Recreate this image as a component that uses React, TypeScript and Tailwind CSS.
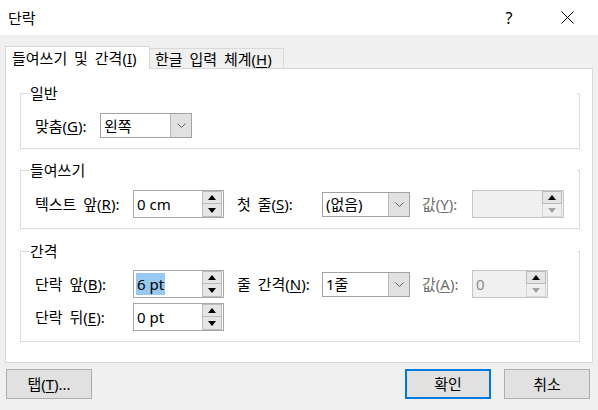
import React from "react";

const LINE = "border-[#dcdcdc]";

function U({ c }: { c: string }) {
  return <span className="underline underline-offset-[2px] decoration-1">{c}</span>;
}

function UpTri({ color = "#000" }: { color?: string }) {
  return (
    <svg width="8" height="5" viewBox="0 0 8 5">
      <polygon points="0,5 8,5 4,0" fill={color} />
    </svg>
  );
}
function DownTri({ color = "#000" }: { color?: string }) {
  return (
    <svg width="8" height="5" viewBox="0 0 8 5">
      <polygon points="0,0 8,0 4,5" fill={color} />
    </svg>
  );
}

function Spin({
  value,
  width,
  selected,
  disabled,
}: {
  value: string;
  width: string;
  selected?: boolean;
  disabled?: boolean;
}) {
  return (
    <div
      className={
        "flex h-[28px] items-center border [word-spacing:0px] " +
        width +
        (disabled ? " border-[#c6c6c6] bg-[#f0f0f0]" : " border-[#a8a8a8] bg-white")
      }
    >
      <div className="flex-1 pl-[2px]">
        {selected ? (
          <span className="bg-[#99c9ef] px-[1px] py-[1px] leading-[20px] inline-block">{value}</span>
        ) : (
          <span className={"px-[1px] " + (disabled ? "text-[#8a8a8a]" : "")}>{value}</span>
        )}
      </div>
      <div className="mr-px flex w-[20px] flex-col">
        <div className="flex h-[13px] items-center justify-center border border-[#bcbcbc] bg-[#e5e5e5]">
          <UpTri />
        </div>
        <div
          className={
            "flex h-[13px] items-center justify-center border border-t-0 " +
            (disabled ? "border-[#d6d6d6] bg-[#f0f0f0]" : "border-[#bcbcbc] bg-[#e5e5e5]")
          }
        >
          <DownTri color={disabled ? "#a3a3a3" : "#000"} />
        </div>
      </div>
    </div>
  );
}

function Combo({ value, width }: { value: string; width: string }) {
  return (
    <div className={"flex h-[25px] border border-[#a2a2a2] bg-white " + width}>
      <div className="flex flex-1 items-center pl-[3px]">{value}</div>
      <div className="flex w-[21px] items-center justify-center border-l border-[#b8b8b8] bg-[#e1e1e1]">
        <svg width="9" height="5" viewBox="0 0 9 5">
          <polyline points="0.5,0.5 4.5,4.5 8.5,0.5" fill="none" stroke="#606060" strokeWidth="1" />
        </svg>
      </div>
    </div>
  );
}

function GroupBox({
  title,
  children,
  className,
  bodyClass,
}: {
  title: string;
  children: React.ReactNode;
  className?: string;
  bodyClass: string;
}) {
  return (
    <div className={"ml-[14px] mr-[12px] " + (className ?? "")}>
      <div className="flex h-[16px]">
        <div className={"h-[8px] w-[9px] self-end border-l border-t " + LINE} />
        <span className="ml-px leading-[16px]">{title}</span>
        <div className="flex-1" />
        <div className={"h-[8px] w-[3px] self-end border-r border-t " + LINE} />
      </div>
      <div className={"border-b border-l border-r pl-[14px] " + LINE + " " + bodyClass}>{children}</div>
    </div>
  );
}

export default function App() {
  return (
    <div className="flex h-[410px] w-[598px] flex-col bg-[#f0f0f0] font-['Noto_Sans','Noto_Sans_CJK_KR',sans-serif] text-[15px] leading-[20px] text-black [word-spacing:3px]">
      {/* title bar */}
      <div className="flex h-[35px] items-center bg-white">
        <div className="pl-[8px]">단락</div>
        <div className="flex-1" />
        <div className="flex h-[35px] w-[46px] items-center justify-center text-[16px]">?</div>
        <div className="ml-[12px] mr-[8px] flex h-[35px] w-[46px] items-center justify-center">
          <svg width="13" height="13" viewBox="0 0 13 13">
            <line x1="0.5" y1="0.5" x2="12.5" y2="12.5" stroke="#000" strokeWidth="1" />
            <line x1="12.5" y1="0.5" x2="0.5" y2="12.5" stroke="#000" strokeWidth="1" />
          </svg>
        </div>
      </div>

      {/* tabs */}
      <div className="flex items-end px-[5px] pt-[11px]">
        <div className="relative z-10 -mb-px flex h-[23px] w-[145px] items-center border-l border-r border-t border-[#d9d9d9] bg-white pl-[6px]">
          <span>
            들여쓰기 및 간격(<U c="I" />)
          </span>
        </div>
        <div className="flex h-[20px] w-[134px] items-center border-r border-t border-[#d9d9d9] bg-[#f0f0f0] pl-[5px]">
          <span>
            한글 입력 체계(<U c="H" />)
          </span>
        </div>
      </div>

      {/* panel */}
      <div className="mx-[5px] border border-[#d9d9d9] bg-white pb-[20px] pt-[16px]">
        <GroupBox title="일반" bodyClass="pb-[10px] pt-[12px]">
          <div className="flex h-[25px] items-center">
            <span className="w-[65px]">
              맞춤(<U c="G" />):
            </span>
            <Combo value="왼쪽" width="w-[92px]" />
          </div>
        </GroupBox>

        <GroupBox title="들여쓰기" className="mt-[13px]" bodyClass="pb-[10px] pt-[12px]">
          <div className="flex h-[28px] items-center">
            <span className="w-[98px]">
              텍스트 앞(<U c="R" />):
            </span>
            <Spin value="0 cm" width="w-[91px]" />
            <span className="ml-[13px] w-[85px]">
              첫 줄(<U c="S" />):
            </span>
            <Combo value="(없음)" width="w-[88px]" />
            <span className="ml-[12px] w-[50px] text-[#6d6d6d]">
              값(<U c="Y" />):
            </span>
            <Spin value="" width="w-[92px]" disabled />
          </div>
        </GroupBox>

        <GroupBox title="간격" className="mt-[14px]" bodyClass="pb-[10px] pt-[11px]">
          <div className="flex h-[28px] items-center">
            <span className="w-[98px]">
              단락 앞(<U c="B" />):
            </span>
            <Spin value="6 pt" width="w-[91px]" selected />
            <span className="ml-[13px] w-[85px]">
              줄 간격(<U c="N" />):
            </span>
            <Combo value="1줄" width="w-[88px]" />
            <span className="ml-[12px] w-[50px] text-[#6d6d6d]">
              값(<U c="A" />):
            </span>
            <Spin value="0" width="w-[76px]" disabled />
          </div>
          <div className="mt-[5px] flex h-[28px] items-center">
            <span className="w-[98px]">
              단락 뒤(<U c="E" />):
            </span>
            <Spin value="0 pt" width="w-[91px]" />
          </div>
        </GroupBox>
      </div>

      {/* buttons */}
      <div className="mt-[6px] flex px-[6px]">
        <div className="flex h-[30px] w-[86px] items-center justify-center border border-[#adadad] bg-[#e1e1e1]">
          <span>
            탭(<U c="T" />)...
          </span>
        </div>
        <div className="flex-1" />
        <div className="flex h-[30px] w-[86px] items-center justify-center border-2 border-[#0078d7] bg-[#e1e1e1]">
          확인
        </div>
        <div className="ml-[13px] mr-[2px] flex h-[30px] w-[86px] items-center justify-center border border-[#adadad] bg-[#e1e1e1]">
          취소
        </div>
      </div>
    </div>
  );
}
